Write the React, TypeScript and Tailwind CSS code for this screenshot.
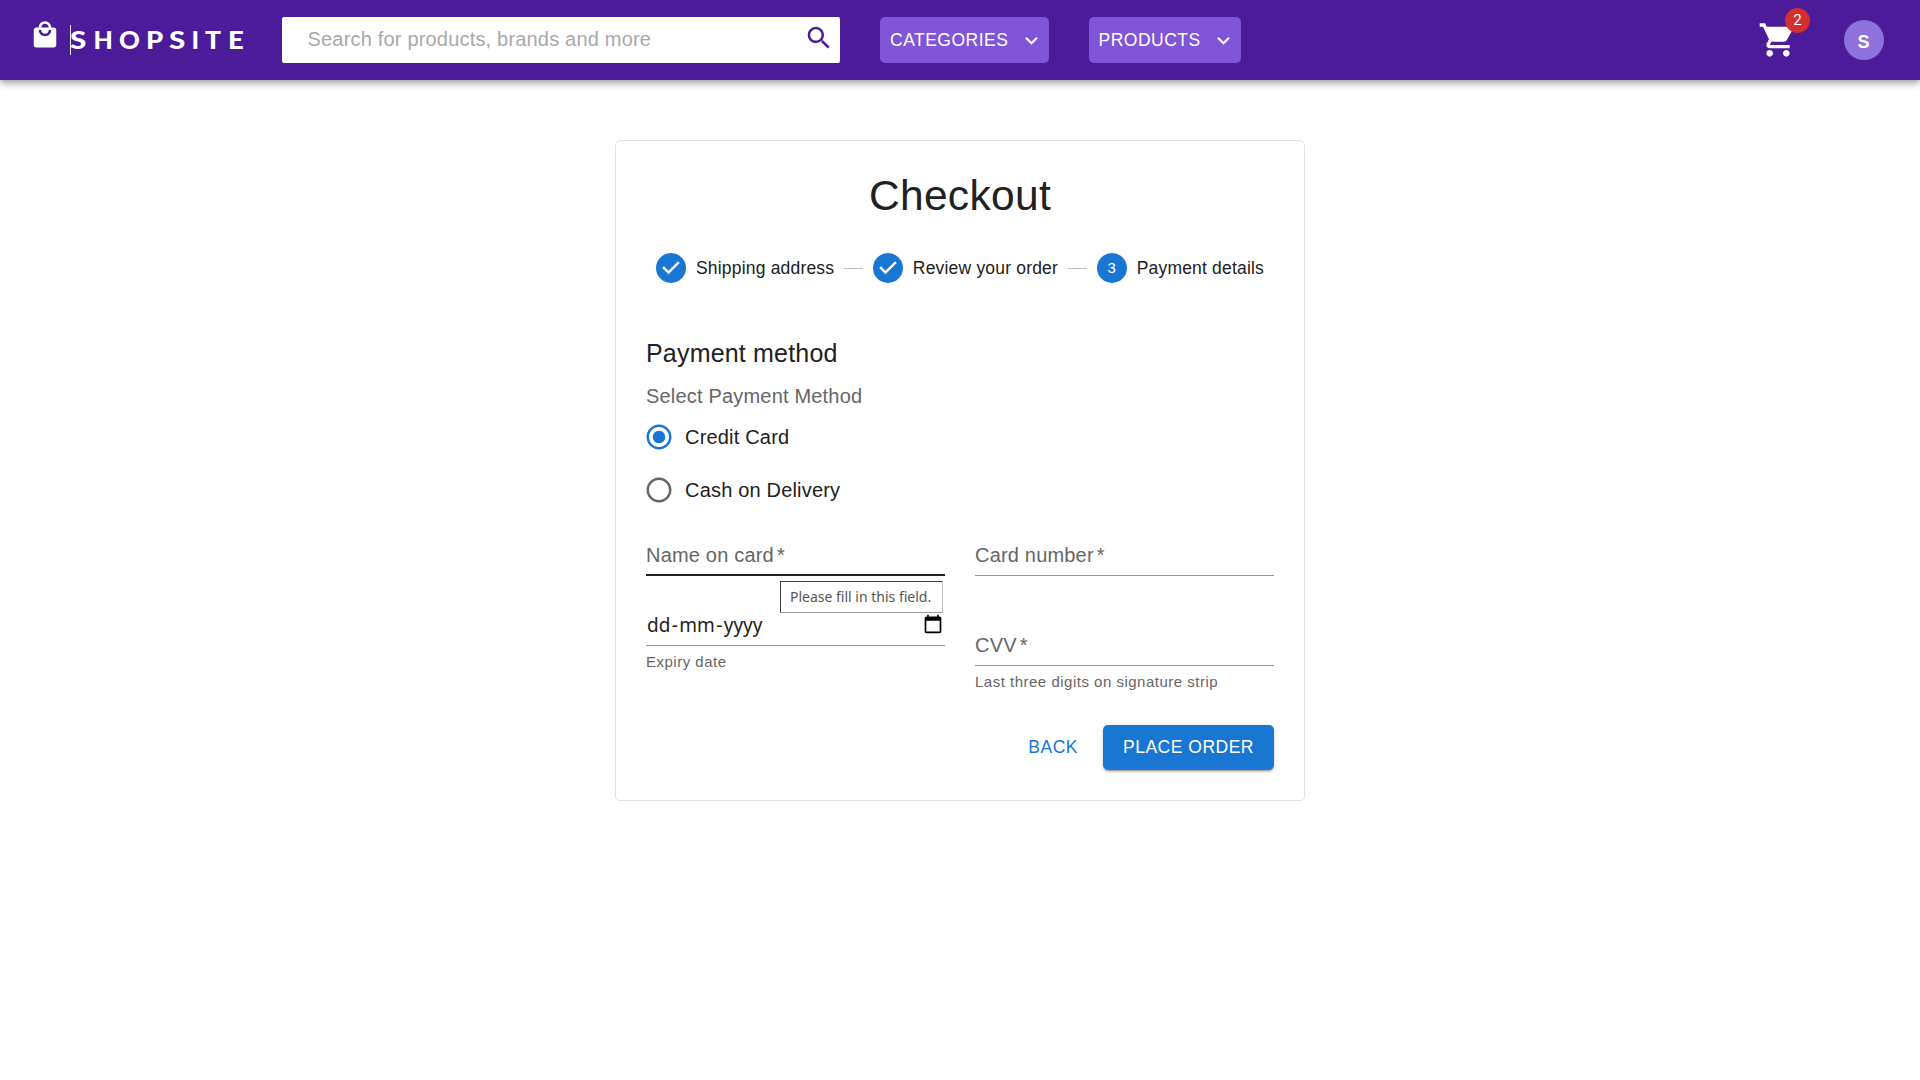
import React from "react";

function Icon({ d, className }: { d: string; className: string }) {
  return (
    <svg viewBox="0 0 24 24" fill="currentColor" className={className} aria-hidden="true">
      <path d={d} />
    </svg>
  );
}

const BAG =
  "M19 6h-2c0-2.76-2.24-5-5-5S7 3.24 7 6H5c-1.1 0-1.99.9-1.99 2L3 20c0 1.1.9 2 2 2h14c1.1 0 2-.9 2-2V8c0-1.1-.9-2-2-2zm-7-3c1.66 0 3 1.34 3 3H9c0-1.66 1.34-3 3-3zm0 10c-2.76 0-5-2.24-5-5h2c0 1.66 1.34 3 3 3s3-1.34 3-3h2c0 2.76-2.24 5-5 5z";
const SEARCH =
  "M15.5 14h-.79l-.28-.27C15.41 12.59 16 11.11 16 9.5 16 5.91 13.09 3 9.5 3S3 5.91 3 9.5 5.91 16 9.5 16c1.61 0 3.09-.59 4.23-1.57l.27.28v.79l5 4.99L20.49 19l-4.99-5zm-6 0C7.01 14 5 11.99 5 9.5S7.01 5 9.5 5 14 7.01 14 9.5 11.99 14 9.5 14z";
const CHEVRON = "M7.41 8.59 12 13.17l4.59-4.58L18 10l-6 6-6-6 1.41-1.41z";
const CART =
  "M7 18c-1.1 0-1.99.9-1.99 2S5.9 22 7 22s2-.9 2-2-.9-2-2-2zM1 2v2h2l3.6 7.59-1.35 2.45c-.16.28-.25.61-.25.96 0 1.1.9 2 2 2h12v-2H7.42c-.14 0-.25-.11-.25-.25l.03-.12.9-1.63h7.45c.75 0 1.41-.41 1.75-1.03l3.58-6.49c.08-.14.12-.31.12-.48 0-.55-.45-1-1-1H5.21l-.94-2H1zm16 16c-1.1 0-1.99.9-1.99 2s.89 2 1.99 2 2-.9 2-2-.9-2-2-2z";
const CHECK =
  "M12 0a12 12 0 1 0 0 24 12 12 0 0 0 0-24zm-2 17l-5-5 1.4-1.4 3.6 3.6 7.6-7.6L19 8l-9 9z";
const RING =
  "M12 2C6.48 2 2 6.48 2 12s4.48 10 10 10 10-4.48 10-10S17.52 2 12 2zm0 18c-4.42 0-8-3.58-8-8s3.58-8 8-8 8 3.58 8 8-3.58 8-8 8z";
const DOT = "M12 7c-2.76 0-5 2.24-5 5s2.24 5 5 5 5-2.24 5-5-2.24-5-5-5z";
const CALENDAR =
  "M20 3h-1V1h-2v2H7V1H5v2H4c-1.1 0-2 .9-2 2v16c0 1.1.9 2 2 2h16c1.1 0 2-.9 2-2V5c0-1.1-.9-2-2-2zm0 18H4V8h16v13z";

function Wordmark() {
  return (
    <div
      aria-label="SHOPSITE"
      className="ml-[10px] flex h-[30px] w-[182px] border-l border-white/90 font-['Lato'] text-[25px] font-black leading-[29px] text-white"
    >
      <span className="-ml-px w-[23.5px] origin-left scale-x-[1.18]">S</span>
      <span className="w-[25px] origin-left">H</span>
      <span className="w-[27.5px] origin-left scale-x-[1.03]">O</span>
      <span className="w-[22.5px] origin-left scale-x-[1.1]">P</span>
      <span className="w-[23px] origin-left scale-x-[1.18]">S</span>
      <span className="w-[13px]">I</span>
      <span className="w-[23px] origin-left scale-x-[1.06]">T</span>
      <span className="origin-left scale-x-[1.1]">E</span>
    </div>
  );
}

function NavMenu({ label, className }: { label: string; className: string }) {
  return (
    <button
      className={`flex h-[46px] items-center justify-between rounded-[5px] bg-[#8055d8] pr-[5px] text-[17.5px] tracking-[0.02857em] text-white ${className}`}
    >
      <span>{label}</span>
      <Icon d={CHEVRON} className="size-[25px]" />
    </button>
  );
}

function Header() {
  return (
    <header className="flex h-20 items-center bg-[#4c1b9a] shadow-[0_2.5px_5px_-1px_rgba(0,0,0,0.2),0_5px_6px_0_rgba(0,0,0,0.14),0_1px_12px_0_rgba(0,0,0,0.12)]">
      <Icon d={BAG} className="-mt-[10px] ml-[30px] size-[30px] text-white" />
      <Wordmark />
      <div className="ml-[30px] flex h-[46px] w-[558px] items-center justify-between rounded-[2px] bg-white pl-[25.5px] pr-[6px]">
        <span className="-mt-[2px] text-[20px] tracking-[0.00938em] text-[#a9a9a9]">
          Search for products, brands and more
        </span>
        <Icon d={SEARCH} className="-mt-[4px] size-[30px] text-[#4c1b9a]" />
      </div>
      <NavMenu label="CATEGORIES" className="ml-10 w-[169px] pl-[10px]" />
      <NavMenu label="PRODUCTS" className="ml-10 w-[152px] pl-[9.5px]" />
      <div className="relative ml-auto size-10 text-white">
        <Icon d={CART} className="size-10" />
        <span className="absolute -top-[12.5px] left-[27px] flex size-[25px] items-center justify-center rounded-full bg-[#d32f2f] pt-px font-['Roboto'] text-[15px]">
          2
        </span>
      </div>
      <div className="ml-[46px] mr-9 flex size-10 items-center justify-center rounded-full bg-[#8e71dc] pt-[5px] pr-px text-[18px] font-bold text-white">
        S
      </div>
    </header>
  );
}

function StepLabel({ children }: { children: React.ReactNode }) {
  return <span className="ml-[10px] whitespace-nowrap text-[17.5px] tracking-[0.01071em]">{children}</span>;
}

function Stepper() {
  return (
    <div className="mt-[31px] flex h-[30px] items-center px-[10px]">
      <Icon d={CHECK} className="size-[30px] shrink-0 text-[#1976d2]" />
      <StepLabel>Shipping address</StepLabel>
      <span className="mx-[10px] h-px flex-1 bg-[#bdbdbd]" />
      <Icon d={CHECK} className="size-[30px] shrink-0 text-[#1976d2]" />
      <StepLabel>Review your order</StepLabel>
      <span className="mx-[10px] h-px flex-1 bg-[#bdbdbd]" />
      <span className="flex size-[30px] shrink-0 items-center justify-center rounded-full bg-[#1976d2] pt-px text-[15px] text-white">
        3
      </span>
      <StepLabel>Payment details</StepLabel>
    </div>
  );
}

function Radio({ label, checked = false }: { label: string; checked?: boolean }) {
  return (
    <div className="-ml-[2px] flex h-[52.5px] items-center text-[20px] tracking-[0.00938em]">
      <Icon
        d={checked ? RING + DOT : RING}
        className={checked ? "size-[30px] text-[#1976d2]" : "size-[30px] text-[#666]"}
      />
      <span className="ml-[11px]">{label}</span>
    </div>
  );
}

function Field({ label, className }: { label: string; className: string }) {
  return (
    <div
      className={`flex h-[40px] items-start pt-[5px] text-[20px] leading-[29px] tracking-[0.00938em] text-[#666] ${className}`}
    >
      {label}
      <span className="ml-[3px]">*</span>
    </div>
  );
}

function Helper({ children }: { children: React.ReactNode }) {
  return <p className="mb-px mt-[3px] text-[15px] leading-[25px] tracking-[0.03333em] text-[#666]">{children}</p>;
}

export default function App() {
  return (
    <div className="min-h-screen bg-white font-['Liberation_Sans',Arial,sans-serif] text-[#212121]">
      <Header />
      <main className="mx-auto mt-[60px] h-[661px] w-[690px] rounded-[5px] border border-[#e0e0e0] p-[30px]">
        <h1 className="-mt-px text-center text-[42.5px] leading-[52px] tracking-[0.00735em]">Checkout</h1>
        <Stepper />
        <h2 className="mt-[50px] text-[25px] leading-[40px] tracking-[0.0075em]">Payment method</h2>
        <p className="mt-[9px] text-[20px] leading-[29px] tracking-[0.00938em] text-[#666]">Select Payment Method</p>
        <Radio label="Credit Card" checked />
        <Radio label="Cash on Delivery" />
        <div className="mt-[20px] grid grid-cols-2 gap-x-[30px]">
          <div>
            <div className="relative">
              <Field label="Name on card" className="border-b-2 border-[#212121]" />
              <div className="absolute left-[134px] top-[45px] flex h-[32px] w-[163px] items-center border border-b-[#999] border-l-[#404040] border-r-[#c4c4c4] border-t-[#404040] bg-white pb-[2px] pl-[9px] font-['Noto_Sans'] text-[14px] text-[#575757]">
                <span className="whitespace-nowrap">Please fill in this field.</span>
              </div>
            </div>
            <div className="mt-[30px] flex h-[40px] items-start justify-between border-b border-[#949494] pr-[2px]">
              <span className="ml-[1px] font-['Noto_Sans'] text-[19px] leading-[39px]">
                dd<span className="mx-[1.4px]">-</span>mm<span className="mx-[1.4px]">-</span>yyyy
              </span>
              <Icon d={CALENDAR} className="mt-[8px] size-[20px] text-black" />
            </div>
            <Helper>Expiry date</Helper>
          </div>
          <div>
            <Field label="Card number" className="border-b border-[#949494]" />
            <div className="h-[50px]" />
            <Field label="CVV" className="border-b border-[#949494]" />
            <Helper>Last three digits on signature strip</Helper>
          </div>
        </div>
        <div className="mt-[30px] flex justify-end text-[17.5px] tracking-[0.02857em]">
          <button className="mr-[15px] h-[45px] px-[10px] text-[#1976d2]">BACK</button>
          <button className="h-[45px] w-[171px] rounded-[5px] bg-[#1976d2] text-white shadow-[0_3px_1px_-2px_rgba(0,0,0,0.2),0_2px_2px_0_rgba(0,0,0,0.14),0_1px_5px_0_rgba(0,0,0,0.12)]">
            PLACE ORDER
          </button>
        </div>
      </main>
    </div>
  );
}
